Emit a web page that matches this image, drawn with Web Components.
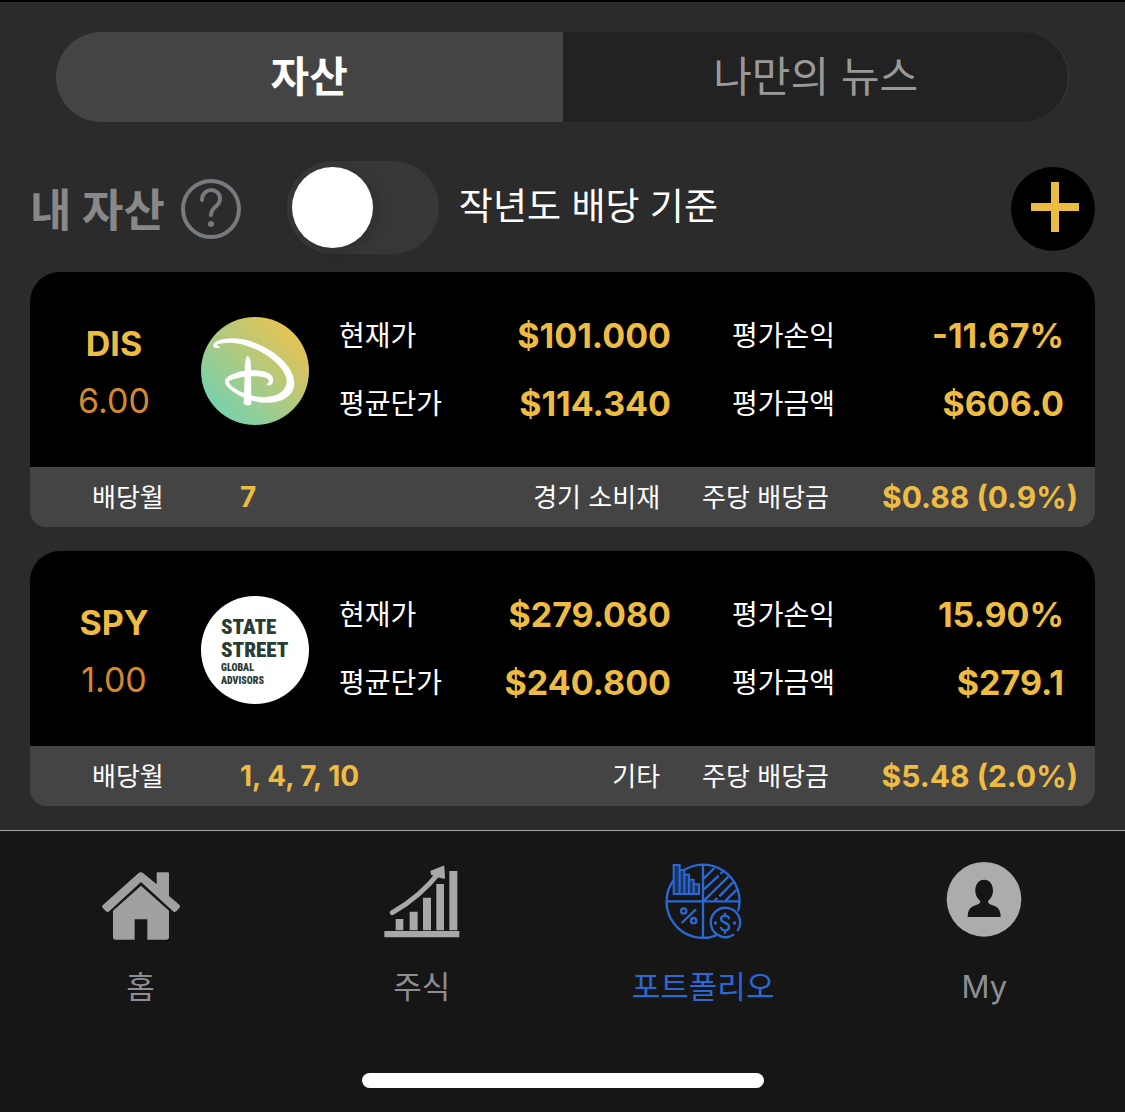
<!DOCTYPE html>
<html lang="ko">
<head>
<meta charset="utf-8">
<meta name="viewport" content="width=device-width, initial-scale=1">
<title>포트폴리오</title>
<style>
  html { background: #161616; }
  body {
    margin: 0;
    font-family: Inter, "Noto Sans CJK KR", sans-serif;
    color: #fff;
    --gold: #eebc42;
    --orange: #d5892f;
    --panel: #444;
  }
</style>
</head>
<body>

<portfolio-page>
  <segment-tabs></segment-tabs>
  <asset-toolbar></asset-toolbar>
  <asset-card
    ticker="DIS" shares="6.00" price="$101.000" average="$114.340"
    profit="-11.67%" total="$606.0" months="7" sector="경기 소비재" dividend="$0.88 (0.9%)">
    <svg viewBox="33 36 324 324" role="img" aria-label="Disney">
      <defs>
        <linearGradient id="dis" x1="0.12" y1="0.88" x2="0.88" y2="0.12">
          <stop offset="0" stop-color="#74d2b0"/>
          <stop offset="1" stop-color="#e9c251"/>
        </linearGradient>
      </defs>
      <circle cx="195" cy="198" r="162" fill="url(#dis)"/>
      <path fill="#fff" d="M90 127C84 129 74 130 70 125C67 110 88 101 130 100C205 101 310 165 313 232C314 280 265 297 215 293C172 288 108 256 105 231C104 213 142 197 185 196C226 195 250 207 250 224C249 240 238 244 230 240C230 237 232 236 236 232C240 224 230 219 222 217C190 210 138 216 116 230C120 248 170 273 215 276C262 277 292 258 290 224C280 170 190 117 125 113C100 113 82 116 79 121C82 123 88 122 90 127Z"/>
      <path fill="#fff" d="M173 153C165 156 164 180 164 210L161 294C163 303 181 304 184 297L183 180C183 165 178 153 173 153Z"/>
    </svg>
  </asset-card>
  <asset-card
    ticker="SPY" shares="1.00" price="$279.080" average="$240.800"
    profit="15.90%" total="$279.1" months="1, 4, 7, 10" sector="기타" dividend="$5.48 (2.0%)">
    <svg viewBox="0 0 108 108" role="img" aria-label="State Street Global Advisors">
      <circle cx="54" cy="54" r="54" fill="#fff"/>
      <g fill="#283c32" font-family="'Liberation Sans Narrow', 'Roboto Condensed', 'Liberation Sans', sans-serif" font-weight="900">
        <text x="20" y="38" font-size="21">STATE</text>
        <text x="20" y="61" font-size="21">STREET</text>
        <text x="20" y="75" font-size="10">GLOBAL</text>
        <text x="20" y="88" font-size="10">ADVISORS</text>
      </g>
    </svg>
  </asset-card>
  <bottom-nav slot="nav">
    <nav-item label="홈">
      <svg viewBox="36 36 234 234" fill="#a0a0a0">
        <path d="M38 166L145 70Q152 64 160 70L200 103V70Q200 67 203 67H234Q237 67 237 70V138L268 164Q272 169 268 174L259 184Q254 189 249 184L153 96L58 184Q53 189 48 184L39 175Q34 170 38 166Z"/>
        <path d="M153 107L237 182V261Q237 269 229 269H172V208H134V269H77Q69 269 69 261V182Z"/>
      </svg>
    </nav-item>
    <nav-item label="주식">
      <svg viewBox="38 36 234 234" fill="#a8a8a8">
        <path d="M76 207H99V241H76ZM118 185H142V241H118ZM158 143H182V241H158ZM198 102H221V241H198ZM237 63H261V241H237ZM42 243H267V262H42Z"/>
        <path d="M66 188Q150 140 208 66" fill="none" stroke="#a8a8a8" stroke-width="15" stroke-linecap="round"/>
        <path d="M182 64L220 49L222 84L210 82L184 73Z" stroke="#a8a8a8" stroke-width="4" stroke-linejoin="round"/>
      </svg>
    </nav-item>
    <nav-item label="포트폴리오" active>
      <svg viewBox="133 36 234 234" fill="none" stroke="#2a68d4" stroke-width="7">
        <path d="M186 65A109 109 0 0 1 355 184M162 90A109 109 0 0 0 290 256M250 45V263M141 154H359"/>
        <path d="M162 45H180V132H162ZM180 60H194V132H180ZM194 74H208V132H194ZM208 89H222V132H208ZM222 103H238V132H222Z" fill="#1c3565" stroke-width="6"/>
        <path d="M253 85L284 54M253 118L297 77M302 72L310 64M253 152L326 80M285 152L293 144M299 139L341 96M318 152L353 117" stroke-width="7"/>
        <circle cx="192" cy="183" r="8"/>
        <circle cx="222" cy="212" r="8"/>
        <path d="M229 178L186 219"/>
        <path d="M343 253A44 44 0 1 1 353 243"/>
        <path d="M328 208C328 194 304 194 304 207C304 220 328 216 328 230C328 245 304 245 304 231M316 188V198M316 240V251"/>
        <circle cx="287" cy="219" r="5" fill="#2a68d4" stroke="none"/>
        <circle cx="345" cy="219" r="5" fill="#2a68d4" stroke="none"/>
      </svg>
    </nav-item>
    <nav-item label="My">
      <svg viewBox="46 33 234 234">
        <circle cx="163" cy="145" r="112" fill="#acacac"/>
        <path fill="#161616" d="M163 86C180 86 191 100 190 121C189 136 182 144 175 150C175 156 178 159 184 161C203 166 213 174 213 198H114C114 174 124 166 142 161C149 159 152 156 152 150C145 144 138 136 137 121C136 100 147 86 163 86Z"/>
      </svg>
    </nav-item>
  </bottom-nav>
</portfolio-page>

<script>
class PortfolioPage extends HTMLElement {
  constructor() {
    super();
    this.attachShadow({ mode: "open" }).innerHTML = `
      <style>
        :host { display: flex; flex-direction: column; min-height: 100vh; }
        main {
          box-sizing: border-box;
          flex: 1;
          display: flex;
          flex-direction: column;
          gap: 24px;
          padding: 30px 30px 24px;
          border-top: 2px solid #000;
          background: #2b2b2b;
        }
      </style>
      <main><slot></slot></main>
      <slot name="nav"></slot>
    `;
  }
}

class SegmentTabs extends HTMLElement {
  constructor() {
    super();
    this.attachShadow({ mode: "open" }).innerHTML = `
      <style>
        :host { display: block; margin: 0 26px 15px; }
        div { display: flex; height: 90px; }
        button {
          flex: 1;
          padding: 0;
          border: 0;
          background: #222;
          color: #999;
          font: 400 42px/90px Inter, "Noto Sans CJK KR", sans-serif;
        }
        button:first-child { border-radius: 45px 0 0 45px; }
        button:last-child { border-radius: 0 45px 45px 0; box-shadow: inset -1px 0 #3c3c3c; }
        button[aria-selected="true"] { background: var(--panel); color: #fff; font-weight: 700; }
      </style>
      <div role="tablist">
        <button role="tab" aria-selected="true">자산</button>
        <button role="tab" aria-selected="false">나만의 뉴스</button>
      </div>
    `;
    const tabs = this.shadowRoot.querySelectorAll("button");
    tabs.forEach(tab => tab.addEventListener("click", () => {
      tabs.forEach(t => t.setAttribute("aria-selected", t === tab));
    }));
  }
}

class AssetToolbar extends HTMLElement {
  constructor() {
    super();
    this.attachShadow({ mode: "open" }).innerHTML = `
      <style>
        :host { display: flex; align-items: center; margin-bottom: -6px; }
        h1 { margin: 0; padding-top: 6px; font-size: 45px; line-height: 66px; font-weight: 700; color: #888; }
        button { margin: 2px 0 0; padding: 0; border: 0; border-radius: 50%; background: none; }
        svg { display: block; }
        .help { margin-left: 16px; margin-right: 46px; }
        input {
          appearance: none;
          display: flex;
          align-items: center;
          box-sizing: border-box;
          width: 152px;
          height: 93px;
          margin: 0 20px 0 0;
          padding: 0 5px;
          border-radius: 47px;
          background: #37373a;
        }
        input::before {
          content: "";
          width: 81px;
          height: 81px;
          border-radius: 50%;
          background: #fff;
          box-shadow: 4px 4px 14px rgba(0, 0, 0, .16);
        }
        input:checked { justify-content: flex-end; background: var(--gold); }
        label { padding-bottom: 2px; font-size: 37px; line-height: 54px; }
        .add { margin-left: auto; background: #000; }
      </style>
      <h1>내 자산</h1>
      <button class="help" aria-label="도움말">
        <svg width="60" height="60" viewBox="0 0 60 60" fill="none" stroke="#777b7f" stroke-linecap="round">
          <circle cx="30" cy="30" r="28" stroke-width="4"/>
          <path d="M21 21C21 8 39 8 39 20C39 28 30 27 30 36" stroke-width="4"/>
          <circle cx="30" cy="45" r="3" fill="#777b7f" stroke="none"/>
        </svg>
      </button>
      <input type="checkbox" role="switch" id="last-year">
      <label for="last-year">작년도 배당 기준</label>
      <button class="add" aria-label="자산 추가">
        <svg width="84" height="84" viewBox="0 0 84 84" stroke="#eebc42" stroke-width="8">
          <path d="M20 40H68M44 15V65"/>
        </svg>
      </button>
    `;
  }
}

class AssetCard extends HTMLElement {
  constructor() {
    super();
    this.attachShadow({ mode: "open" });
  }

  connectedCallback() {
    const get = name => this.getAttribute(name);
    this.shadowRoot.innerHTML = `
      <style>
        :host { display: block; border-radius: 30px 30px 16px 16px; overflow: hidden; }
        .body {
          display: grid;
          grid-template-columns: 168px 114px 1fr;
          align-items: center;
          height: 195px;
          padding-right: 31px;
          background: #000;
        }
        .name { padding-top: 4px; text-align: center; font-size: 34px; line-height: 57px; }
        h2 { margin: 0; font-size: 34px; line-height: 57px; font-weight: 700; color: var(--gold); }
        .shares { font-weight: 400; color: var(--orange); }
        ::slotted(svg) { display: block; width: 108px; height: 108px; margin: 3px auto 0; }
        dl { margin: 0; }
        dt { padding-bottom: 4px; font-size: 28px; white-space: nowrap; }
        dd { margin: 0; font-weight: 700; color: var(--gold); white-space: nowrap; }
        .stats { display: grid; grid-template-columns: 1fr 1fr; column-gap: 61px; padding-left: 27px; }
        .stats div { display: flex; justify-content: space-between; align-items: center; height: 68px; }
        .stats dd { font-size: 34px; }
        .foot {
          display: flex;
          align-items: center;
          height: 60px;
          padding: 0 17px 0 62px;
          background: var(--panel);
        }
        .foot dt { font-size: 26px; }
        .months { display: flex; align-items: center; flex: 1; }
        .months dt { width: 148px; }
        .months dd { font-size: 28px; }
        .sector { margin-right: 42px; padding-bottom: 4px; font-size: 26px; }
        .dividend { display: flex; align-items: center; }
        .dividend dd { min-width: 249px; font-size: 30px; text-align: right; }
      </style>
      <article>
        <div class="body">
          <div class="name">
            <h2>${get("ticker")}</h2>
            <div class="shares">${get("shares")}</div>
          </div>
          <slot></slot>
          <dl class="stats">
            <div><dt>현재가</dt><dd>${get("price")}</dd></div>
            <div><dt>평가손익</dt><dd>${get("profit")}</dd></div>
            <div><dt>평균단가</dt><dd>${get("average")}</dd></div>
            <div><dt>평가금액</dt><dd>${get("total")}</dd></div>
          </dl>
        </div>
        <div class="foot">
          <dl class="months"><dt>배당월</dt><dd>${get("months")}</dd></dl>
          <span class="sector">${get("sector")}</span>
          <dl class="dividend"><dt>주당 배당금</dt><dd>${get("dividend")}</dd></dl>
        </div>
      </article>
    `;
  }
}

class BottomNav extends HTMLElement {
  constructor() {
    super();
    this.attachShadow({ mode: "open" }).innerHTML = `
      <style>
        :host { display: block; border-top: 1px solid #a4a4a4; background: #161616; }
        nav { display: flex; padding-top: 31px; }
        .home-bar { width: 36%; max-width: 402px; height: 15px; margin: 62px auto 24px; border-radius: 8px; background: #fff; }
      </style>
      <nav><slot></slot></nav>
      <div class="home-bar"></div>
    `;
  }
}

class NavItem extends HTMLElement {
  constructor() {
    super();
    this.attachShadow({ mode: "open" });
  }

  connectedCallback() {
    this.shadowRoot.innerHTML = `
      <style>
        :host { display: block; flex: 1; color: #8e8e93; }
        :host([active]) { color: #2a68d4; }
        a {
          display: flex;
          flex-direction: column;
          align-items: center;
          gap: 23px;
          color: inherit;
          font-size: 31px;
          line-height: 48px;
          text-decoration: none;
        }
        ::slotted(svg) { display: block; width: 78px; height: 78px; }
      </style>
      <a href="#"><slot></slot><span>${this.getAttribute("label")}</span></a>
    `;
  }
}

customElements.define("portfolio-page", PortfolioPage);
customElements.define("segment-tabs", SegmentTabs);
customElements.define("asset-toolbar", AssetToolbar);
customElements.define("asset-card", AssetCard);
customElements.define("bottom-nav", BottomNav);
customElements.define("nav-item", NavItem);
</script>
</body>
</html>
